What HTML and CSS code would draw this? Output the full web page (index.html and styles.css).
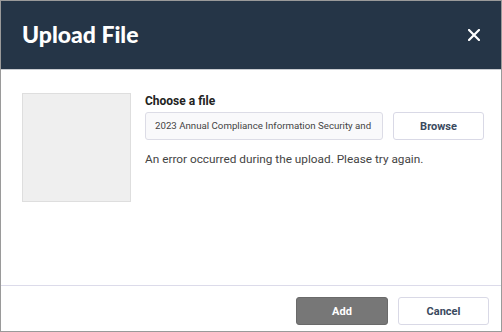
FILE: index.html
```html
<!DOCTYPE html>
<html>
<head>
<meta charset="utf-8">
<link rel="stylesheet" href="styles.css">
</head>
<body>
<div class="dialog">
  <div class="header">
    <h1 class="title">Upload File</h1>
    <button class="close" aria-label="Close">
      <svg width="12" height="12" viewBox="0 0 12 12"><path d="M1 1L11 11M11 1L1 11" stroke="#fff" stroke-width="2.2" stroke-linecap="square"/></svg>
    </button>
  </div>
  <div class="body">
    <div class="preview"></div>
    <div class="form">
      <div class="label">Choose a file</div>
      <div class="row">
        <div class="input">2023 Annual Compliance Information Security and</div>
        <button class="btn browse">Browse</button>
      </div>
      <div class="error">An error occurred during the upload. Please try again.</div>
    </div>
  </div>
  <div class="footer">
    <button class="btn add">Add</button>
    <button class="btn cancel">Cancel</button>
  </div>
</div>
</body>
</html>
```
FILE: styles.css
```css
* { box-sizing: border-box; }
html, body { margin: 0; padding: 0; }
body { width: 502px; height: 332px; background: #fff; font-family: Roboto, "Liberation Sans", sans-serif; }
.dialog {
  width: 502px; height: 332px;
  border: 1px solid #9a9a9a;
  display: flex; flex-direction: column;
  background: #fff;
}
.header {
  height: 69px;
  background: #253547;
  border-bottom: 1px solid #c9ccd1;
  display: flex; align-items: center; justify-content: space-between;
  padding: 0 21px 0 21px;
  flex: none;
}
.title {
  margin: 0; color: #fff;
  font-family: Lato, Roboto, sans-serif;
  font-weight: 900; font-size: 23px;
  padding-bottom: 2px;
}
.close { background: none; border: 0; padding: 0; width: 12px; height: 12px; display: flex; cursor: pointer; }
.body {
  flex: 1;
  display: flex;
  padding: 23px 21px 0 21px;
  gap: 14px;
  border-bottom: 1px solid #dcdbea;
}
.preview {
  width: 109px; height: 109px;
  background: #efefef;
  border: 1px solid #dedede;
  flex: none;
}
.form { display: flex; flex-direction: column; padding-top: 1px; }
.label { font-size: 12px; font-weight: 700; color: #222; line-height: 15px; margin-bottom: 3px; }
.row { display: flex; gap: 10px; }
.input {
  width: 238px; height: 28px;
  border: 1px solid #dcdce6; border-radius: 3px;
  background: #f9f9fb;
  font-size: 9.7px; color: #444;
  line-height: 26px; padding: 0 9px;
  white-space: nowrap; overflow: hidden;
}
.btn {
  font-family: Roboto, "Liberation Sans", sans-serif;
  width: 91px; height: 28px;
  border-radius: 3px;
  font-size: 11px; font-weight: 700;
  cursor: pointer;
}
.browse, .cancel { background: #fff; border: 1px solid #d9d9e6; color: #3a4a5e; }
.error { font-size: 11.8px; color: #444; margin-top: 12px; line-height: 15px; }
.footer {
  height: 45px; flex: none;
  display: flex; justify-content: flex-end; align-items: flex-start;
  gap: 10px; padding: 11px 12px 0 0;
}
.add { background: #777; border: 1px solid #6a6a6a; color: #fff; width: 92px; }
```
